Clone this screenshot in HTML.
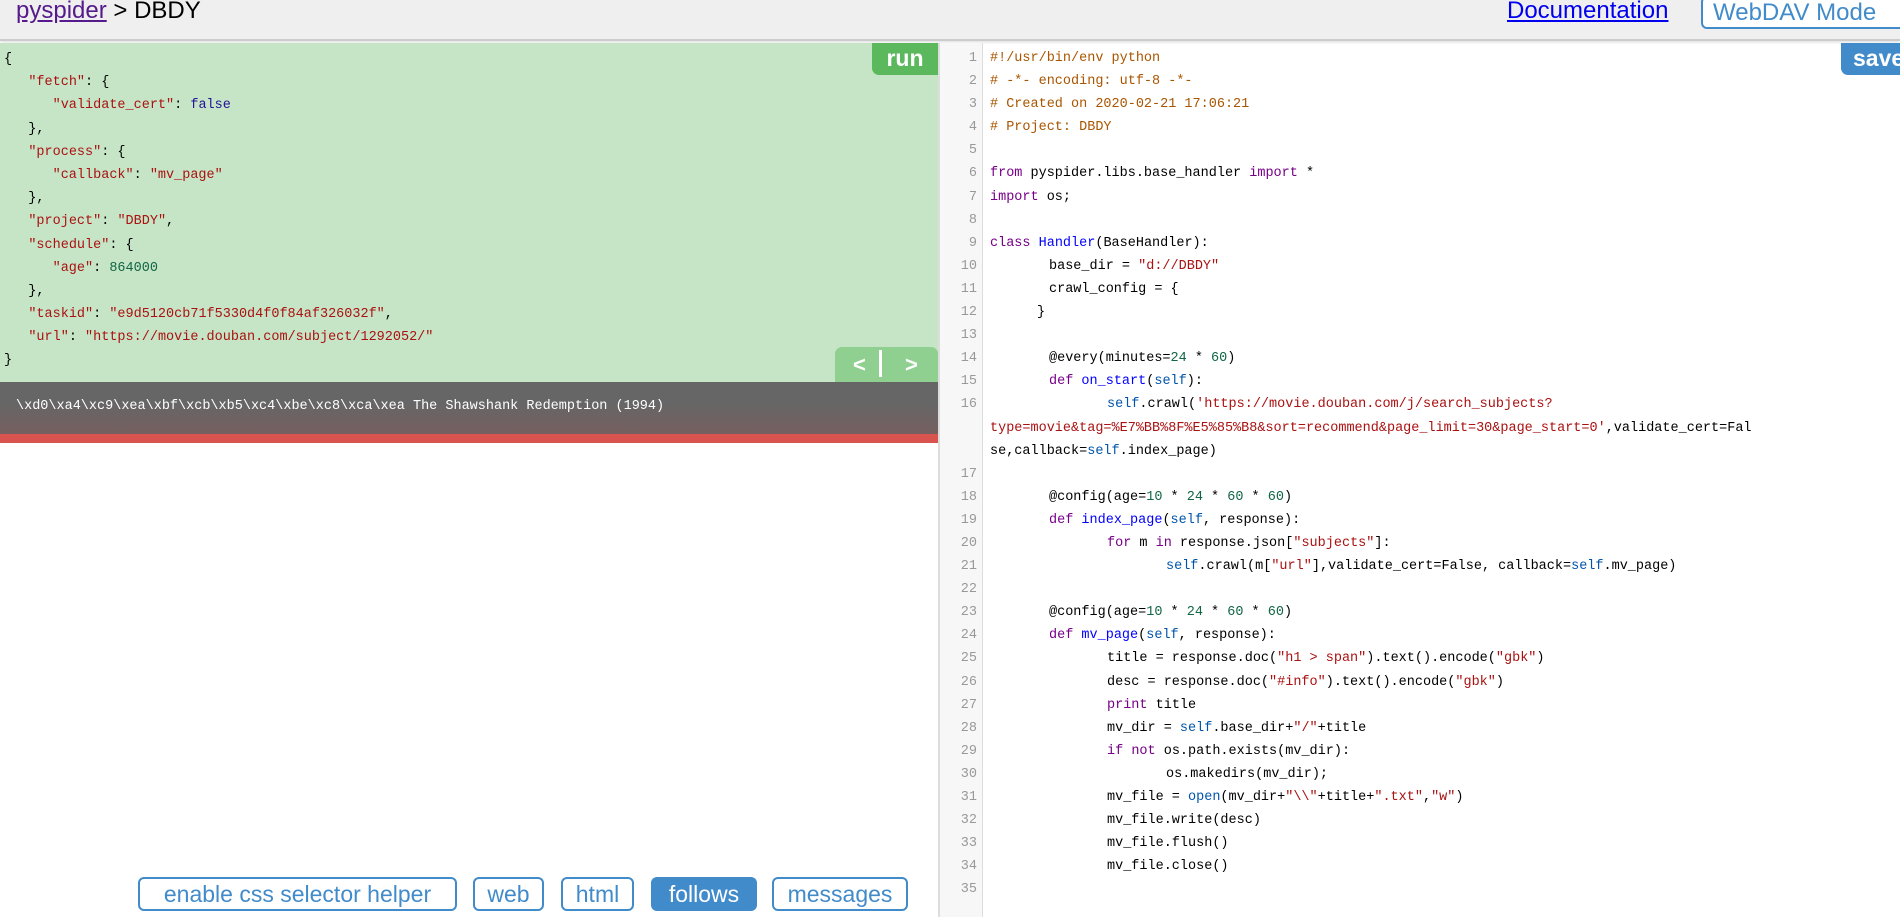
<!DOCTYPE html>
<html><head><meta charset="utf-8">
<style>
*{margin:0;padding:0;box-sizing:border-box}
html,body{width:1900px;height:917px;overflow:hidden;background:#fff;font-family:"Liberation Sans",sans-serif}
#hdr{position:absolute;left:0;top:0;width:1900px;height:41px;background:#efefef;border-bottom:2px solid #ccc;box-shadow:0 1px 3px rgba(0,0,0,.15)}
#hdr .t{position:absolute;left:16px;top:-3px;font-size:24px;color:#000}
#hdr .t a{color:#551a8b;text-decoration:underline}
#doc{position:absolute;left:1507px;top:-3px;font-size:24px;color:#00e;text-decoration:underline}
#dav{position:absolute;left:1701px;top:-4px;height:33px;width:220px;border:2px solid #428bca;border-radius:6px;color:#428bca;font-size:24px;padding:0 10px;line-height:30px;background:#fff}
.mono{font-family:"Liberation Mono",monospace;font-size:13.5px}
.l,.c,#bar{white-space:pre}
#left{position:absolute;left:0;top:43px;width:938px;height:874px}
#json{position:absolute;left:0;top:0;width:938px;height:339px;background:#c6e5c6}
#json .l{height:23.2px;line-height:23.2px;color:#000;padding-left:4px}
#json .in{padding-top:5px}
#run{position:absolute;right:0;top:0;width:66px;height:32px;background:#5cb85c;color:#fff;font-weight:bold;font-size:23px;text-align:center;line-height:30px;border-radius:0 0 0 7px;font-family:"Liberation Sans",sans-serif}
#nav{position:absolute;left:835px;top:304px;width:103px;height:35px;background:#8fcf8f;border-radius:7px 7px 0 0;color:#fff;font-weight:bold;font-size:22px;line-height:35px;font-family:"Liberation Sans",sans-serif}
#bar{position:absolute;left:0;top:339px;width:938px;height:52px;background:linear-gradient(#666,#666 40%,#765f60);color:#fff;line-height:50px;padding-left:16px}
#red{position:absolute;left:0;top:391px;width:938px;height:9px;background:#d9534f}
.btn{position:absolute;top:877px;height:34px;border:2px solid #428bca;border-radius:6px;color:#428bca;font-size:23px;line-height:30px;text-align:center;background:#fff}
.btn.on{background:#428bca;color:#fff}
#sep{position:absolute;left:938px;top:43px;width:2px;height:874px;background:#ddd}
#gut{position:absolute;left:940px;top:43px;width:43px;height:874px;background:#f7f7f7;border-right:1px solid #ddd}
#code{position:absolute;left:940px;top:43px;width:960px;height:874px}
#code .r{position:relative;height:23.1px;line-height:23.1px}
#code .n{position:absolute;left:0;width:37px;text-align:right;color:#999}
#code .c{position:absolute;left:50px;color:#000}
#save{position:absolute;left:1841px;top:43px;width:80px;height:32px;background:#428bca;color:#fff;font-weight:bold;font-size:23px;line-height:30px;padding-left:12px;border-radius:0 0 0 7px}
.cm{color:#a50}.kw{color:#708}.df{color:#00f}.st{color:#a11}.nu{color:#164}.v2{color:#05a}.bl{color:#219}
</style></head><body>
<div id="hdr"><div class="t"><a>pyspider</a> &gt; DBDY</div><a id="doc">Documentation</a><div id="dav">WebDAV Mode</div></div>
<div id="left">
<div id="json" class="mono"><div class="in">
<div class="l">{</div>
<div class="l">   <span class="st">"fetch"</span>: {</div>
<div class="l">      <span class="st">"validate_cert"</span>: <span class="bl">false</span></div>
<div class="l">   },</div>
<div class="l">   <span class="st">"process"</span>: {</div>
<div class="l">      <span class="st">"callback"</span>: <span class="st">"mv_page"</span></div>
<div class="l">   },</div>
<div class="l">   <span class="st">"project"</span>: <span class="st">"DBDY"</span>,</div>
<div class="l">   <span class="st">"schedule"</span>: {</div>
<div class="l">      <span class="st">"age"</span>: <span class="nu">864000</span></div>
<div class="l">   },</div>
<div class="l">   <span class="st">"taskid"</span>: <span class="st">"e9d5120cb71f5330d4f0f84af326032f"</span>,</div>
<div class="l">   <span class="st">"url"</span>: <span class="st">"https://movie.douban.com/subject/1292052/"</span></div>
<div class="l">}</div>
</div>
<div id="run">run</div>
<div id="nav"><span style="position:absolute;left:18px">&lt;</span><span style="position:absolute;left:44px;top:3px;width:3px;height:27px;background:#fff"></span><span style="position:absolute;left:70px">&gt;</span></div>
</div>
<div id="bar" class="mono">\xd0\xa4\xc9\xea\xbf\xcb\xb5\xc4\xbe\xc8\xca\xea The Shawshank Redemption (1994)</div>
<div id="red"></div>
</div>
<div class="btn" style="left:138px;width:319px">enable css selector helper</div>
<div class="btn" style="left:473px;width:71px">web</div>
<div class="btn" style="left:561px;width:73px">html</div>
<div class="btn on" style="left:651px;width:106px">follows</div>
<div class="btn" style="left:772px;width:136px">messages</div>
<div id="sep"></div>
<div id="gut"></div>
<div id="code" class="mono" style="padding-top:4px">
<div class="r"><span class="n">1</span><span class="c"><span class="cm">#!/usr/bin/env python</span></span></div>
<div class="r"><span class="n">2</span><span class="c"><span class="cm"># -*- encoding: utf-8 -*-</span></span></div>
<div class="r"><span class="n">3</span><span class="c"><span class="cm"># Created on 2020-02-21 17:06:21</span></span></div>
<div class="r"><span class="n">4</span><span class="c"><span class="cm"># Project: DBDY</span></span></div>
<div class="r"><span class="n">5</span></div>
<div class="r"><span class="n">6</span><span class="c"><span class="kw">from</span> pyspider.libs.base_handler <span class="kw">import</span> *</span></div>
<div class="r"><span class="n">7</span><span class="c"><span class="kw">import</span> os;</span></div>
<div class="r"><span class="n">8</span></div>
<div class="r"><span class="n">9</span><span class="c"><span class="kw">class</span> <span class="df">Handler</span>(BaseHandler):</span></div>
<div class="r"><span class="n">10</span><span class="c" style="left:109px">base_dir = <span class="st">"d://DBDY"</span></span></div>
<div class="r"><span class="n">11</span><span class="c" style="left:109px">crawl_config = {</span></div>
<div class="r"><span class="n">12</span><span class="c" style="left:97px">}</span></div>
<div class="r"><span class="n">13</span></div>
<div class="r"><span class="n">14</span><span class="c" style="left:109px">@every(minutes=<span class="nu">24</span> * <span class="nu">60</span>)</span></div>
<div class="r"><span class="n">15</span><span class="c" style="left:109px"><span class="kw">def</span> <span class="df">on_start</span>(<span class="v2">self</span>):</span></div>
<div class="r"><span class="n">16</span><span class="c" style="left:167px"><span class="v2">self</span>.crawl(<span class="st">'https://movie.douban.com/j/search_subjects?</span></span></div>
<div class="r"><span class="c"><span class="st">type=movie&amp;tag=%E7%BB%8F%E5%85%B8&amp;sort=recommend&amp;page_limit=30&amp;page_start=0'</span>,validate_cert=Fal</span></div>
<div class="r"><span class="c">se,callback=<span class="v2">self</span>.index_page)</span></div>
<div class="r"><span class="n">17</span></div>
<div class="r"><span class="n">18</span><span class="c" style="left:109px">@config(age=<span class="nu">10</span> * <span class="nu">24</span> * <span class="nu">60</span> * <span class="nu">60</span>)</span></div>
<div class="r"><span class="n">19</span><span class="c" style="left:109px"><span class="kw">def</span> <span class="df">index_page</span>(<span class="v2">self</span>, response):</span></div>
<div class="r"><span class="n">20</span><span class="c" style="left:167px"><span class="kw">for</span> m <span class="kw">in</span> response.json[<span class="st">"subjects"</span>]:</span></div>
<div class="r"><span class="n">21</span><span class="c" style="left:226px"><span class="v2">self</span>.crawl(m[<span class="st">"url"</span>],validate_cert=False, callback=<span class="v2">self</span>.mv_page)</span></div>
<div class="r"><span class="n">22</span></div>
<div class="r"><span class="n">23</span><span class="c" style="left:109px">@config(age=<span class="nu">10</span> * <span class="nu">24</span> * <span class="nu">60</span> * <span class="nu">60</span>)</span></div>
<div class="r"><span class="n">24</span><span class="c" style="left:109px"><span class="kw">def</span> <span class="df">mv_page</span>(<span class="v2">self</span>, response):</span></div>
<div class="r"><span class="n">25</span><span class="c" style="left:167px">title = response.doc(<span class="st">"h1 &gt; span"</span>).text().encode(<span class="st">"gbk"</span>)</span></div>
<div class="r"><span class="n">26</span><span class="c" style="left:167px">desc = response.doc(<span class="st">"#info"</span>).text().encode(<span class="st">"gbk"</span>)</span></div>
<div class="r"><span class="n">27</span><span class="c" style="left:167px"><span class="kw">print</span> title</span></div>
<div class="r"><span class="n">28</span><span class="c" style="left:167px">mv_dir = <span class="v2">self</span>.base_dir+<span class="st">"/"</span>+title</span></div>
<div class="r"><span class="n">29</span><span class="c" style="left:167px"><span class="kw">if</span> <span class="kw">not</span> os.path.exists(mv_dir):</span></div>
<div class="r"><span class="n">30</span><span class="c" style="left:226px">os.makedirs(mv_dir);</span></div>
<div class="r"><span class="n">31</span><span class="c" style="left:167px">mv_file = <span class="v2">open</span>(mv_dir+<span class="st">"\\"</span>+title+<span class="st">".txt"</span>,<span class="st">"w"</span>)</span></div>
<div class="r"><span class="n">32</span><span class="c" style="left:167px">mv_file.write(desc)</span></div>
<div class="r"><span class="n">33</span><span class="c" style="left:167px">mv_file.flush()</span></div>
<div class="r"><span class="n">34</span><span class="c" style="left:167px">mv_file.close()</span></div>
<div class="r"><span class="n">35</span></div>
</div>
<div id="save">save</div>
</body></html>
